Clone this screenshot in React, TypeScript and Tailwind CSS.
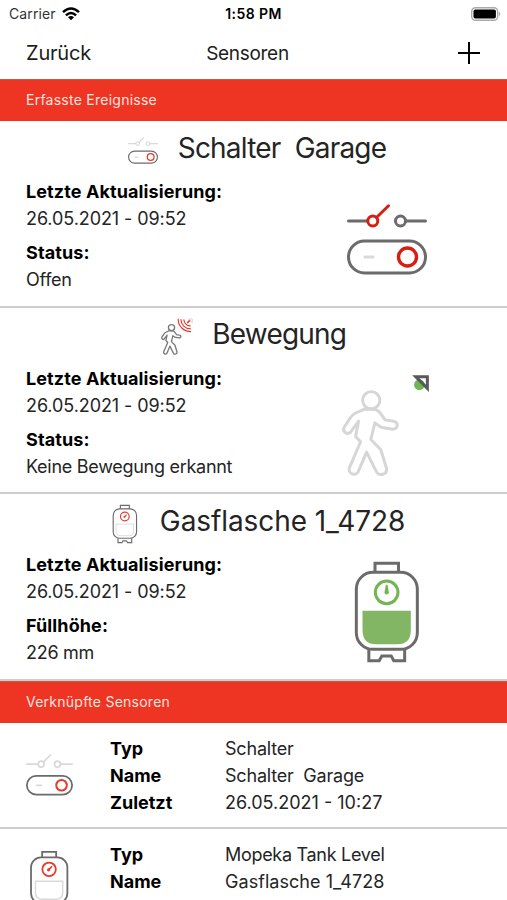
import type { ReactNode } from 'react'

type IconProps = { className: string; small?: boolean }

const SwitchIcon = ({ className, small }: IconProps) => {
  const accent = small ? '#d9d9d9' : '#d81e12'
  const line = small ? '#d9d9d9' : '#6b6b6b'
  return (
    <svg viewBox="0 0 80 71" className={className} fill="none" strokeWidth="3" strokeLinecap="round">
      <path d="M1.5 17H20M59 17H78.500" stroke={line} />
      <circle cx="53.500" cy="17" r="5" stroke={line} />
      <circle cx="25.800" cy="17" r="5" stroke={accent} />
      <path d="M29.500 13.500L41.500 1.800" stroke={accent} />
      <rect x="1.500" y="37" width="77" height="32" rx="16" stroke="#6b6b6b" />
      <path d="M18 53H26" stroke="#d9d9d9" />
      <circle cx="60.500" cy="53" r="9" stroke={small ? '#e8392b' : '#d81e12'} strokeWidth="3.400" />
    </svg>
  )
}

const MotionIcon = ({ className, small }: IconProps) => (
  <svg viewBox="30 40 280 320" className={className} fill="none" strokeLinejoin="round" strokeLinecap="round">
    <g stroke={small ? '#777777' : '#d6d6d6'} strokeWidth={small ? 11 : 9}>
      <circle cx="124" cy="121" r="26" />
      <path d="M106 147L76 160Q66 165 61 174L42 203C36 217 56 228 64 214L86 184L77 230L92 246L58 325C53 341 77 352 85 336L110 277L140 337C150 352 174 342 170 326L153 270L123 239L135 189L150 200Q154 203 161 204L188 208C205 208 208 186 191 184L166 180L149 157Q142 148 128 148Z" />
    </g>
    {small ? (
      <g stroke="#e8392b" strokeWidth="10">
        <path d="M180 50A105 105 0 0 0 285 155" />
        <path d="M203 53A80 80 0 0 0 283 131" />
        <path d="M228 55A55 55 0 0 0 281 107" />
        <path d="M260 78L276 62" strokeWidth="14" />
        <path d="M270 48H298V76Z" stroke="#c4c4c4" strokeWidth="6" />
      </g>
    ) : (
      <g>
        <circle cx="269" cy="74" r="16" fill="#6db651" />
        <path d="M258 50H293V85Z" stroke="#595959" strokeWidth="9" strokeLinejoin="miter" />
      </g>
    )}
  </svg>
)

const TankIcon = ({ className, small }: IconProps) => (
  <svg viewBox="40 30 200 312" className={className} fill="none" strokeWidth="9">
    <rect x="49.500" y="67" width="183" height="231" rx="50" stroke="#6b6b6b" />
    <path d="M105.500 67V39.500H176V67M87 297V332.500H118L126 318H154L162 332.500H194.500V297" stroke="#6b6b6b" />
    {small ? (
      <path d="M72 187H209V244Q209 278 174 278H107Q72 278 72 244Z" stroke="#d9d9d9" strokeWidth="7" />
    ) : (
      <path d="M68 182H213V240Q213 283 172 283H109Q68 283 68 240Z" fill="#82b564" />
    )}
    <circle cx="140.500" cy="127" r="34" stroke={small ? '#e8392b' : '#72b552'} />
    {small ? (
      <g>
        <path d="M138 130L155 112" stroke="#e8392b" strokeWidth="8" />
        <circle cx="138" cy="130" r="8" fill="#e8392b" />
      </g>
    ) : (
      <path d="M138 104H143L147 127A6.500 6.500 0 1 1 134 127Z" fill="#72b552" />
    )}
  </svg>
)

const SectionBar = ({ children }: { children: ReactNode }) => (
  <h2 className="h-[42px] shrink-0 bg-[#ee3524] border-t border-[#c9583f] px-[26px] text-[14px] leading-[40px] tracking-[0.25px] text-[#ffe3df]">
    {children}
  </h2>
)

type EventProps = {
  title: ReactNode
  icon: ReactNode
  label: string
  value: string
  image: ReactNode
}

const EventCard = ({ title, icon, label, value, image }: EventProps) => (
  <article className="h-[186.500px] shrink-0 border-b-2 border-[#cdcdcd] text-[18px] leading-[27px]">
    <div className="flex h-[57px] items-center justify-center gap-4 pb-[3px]">
      <div className="flex w-[38px] justify-center pt-[5px]">{icon}</div>
      {title}
    </div>
    <div className="flex justify-between pl-[26px]">
      <div className="text-[#242424]">
        <p className="font-bold tracking-[0.1px] text-black">Letzte Aktualisierung:</p>
        <p className="tracking-[-0.080px]">26.05.2021 - 09:52</p>
        <p className="mt-[7px] font-bold tracking-[0.1px] text-black">{label}</p>
        <p className="tracking-[-0.280px]">{value}</p>
      </div>
      <div className="flex h-[122px] w-[241px] items-center justify-center">{image}</div>
    </div>
  </article>
)

type SensorProps = { icon: ReactNode; children: ReactNode }

const SensorRow = ({ icon, children }: SensorProps) => (
  <article className="flex h-[106.300px] shrink-0 border-b-2 border-[#cdcdcd] pl-[26px] pt-[12.500px] text-[18px] leading-[27px]">
    <div className="flex w-[84px] items-start">{icon}</div>
    <dl className="grid auto-rows-[27px] grid-cols-[115px_auto] text-[#242424]">{children}</dl>
  </article>
)

const Term = ({ children }: { children: string }) => (
  <dt className="font-bold text-black">{children}</dt>
)

const App = () => {
  return (
    <main className="flex h-[900px] w-[507px] flex-col overflow-hidden bg-white font-['Inter','Liberation_Sans',sans-serif] text-black">
      <header className="h-[79px] shrink-0">
        <div className="grid h-[27px] grid-cols-3 items-center pl-[9px] pr-[6px] text-[14px]">
          <div className="flex items-center gap-1.5 text-[#333333]">
            <span className="tracking-[0.1px]">Carrier</span>
            <svg viewBox="0 0 18 14" className="h-[14px] w-[18px]" fill="none" stroke="black" strokeWidth="2.500">
              <path d="M1 5.200Q9-2.200 17 5.200M3.900 8.300Q9 3.600 14.100 8.300" />
              <path d="M6 10.200Q9 7.600 12 10.200L9 13.200Z" fill="black" stroke="none" />
            </svg>
          </div>
          <span className="whitespace-nowrap pr-[3px] text-center font-semibold tracking-[0.4px]">1:58 PM</span>
          <svg viewBox="0 0 30 14" className="h-[14px] w-[30px] justify-self-end">
            <rect x=".7" y=".7" width="26" height="12.600" rx="3.800" fill="white" stroke="#aaaaaa" strokeWidth="1.400" />
            <rect x="2.500" y="2.500" width="22.400" height="9" rx="1.800" fill="black" />
            <path d="M28 4.500Q30.500 7 28 9.500Z" fill="#aaaaaa" />
          </svg>
        </div>
        <nav className="grid h-[52px] grid-cols-3 items-center pl-[26px] pr-[27px]">
          <span className="text-[20px] tracking-[-0.2px] text-[#1c1c1c]">Zurück</span>
          <h1 className="pr-[11px] pt-0.5 text-center text-[19px] tracking-[-0.3px] text-[#1c1c1c]">Sensoren</h1>
          <svg viewBox="0 0 22 22" className="h-[22px] w-[22px] justify-self-end" stroke="black" strokeWidth="2">
            <path d="M0 11H22M11 0V22" />
          </svg>
        </nav>
      </header>

      <SectionBar>Erfasste Ereignisse</SectionBar>
      <EventCard
        title={<h3 className="-mr-[3px] whitespace-pre text-[28px] tracking-[-0.8px] text-[#242424]">Schalter  Garage</h3>}
        icon={<SwitchIcon small className="h-[27px] w-[30px]" />}
        label="Status:"
        value="Offen"
        image={<SwitchIcon className="h-[71px] w-[80px]" />}
      />
      <EventCard
        title={<h3 className="mr-[2.500px] text-[28px] tracking-[-0.8px] text-[#242424]">Bewegung</h3>}
        icon={<MotionIcon small className="h-[38px] w-[34px]" />}
        label="Status:"
        value="Keine Bewegung erkannt"
        image={<MotionIcon className="mt-0.5 h-[107px] w-[93px]" />}
      />
      <EventCard
        title={<h3 className="-mr-[4px] text-[28px] tracking-[-0.080px] text-[#242424]">Gasflasche 1_4728</h3>}
        icon={<TankIcon small className="h-[40px] w-[25.500px]" />}
        label="Füllhöhe:"
        value="226 mm"
        image={<TankIcon className="mr-px h-[104px] w-[67px]" />}
      />

      <SectionBar>Verknüpfte Sensoren</SectionBar>
      <SensorRow icon={<SwitchIcon small className="mt-[19px] h-[42px] w-[47px]" />}>
        <Term>Typ</Term>
        <dd className="tracking-[-0.2px]">Schalter</dd>
        <Term>Name</Term>
        <dd className="whitespace-pre tracking-[-0.2px]">Schalter  Garage</dd>
        <Term>Zuletzt</Term>
        <dd>26.05.2021 - 10:27</dd>
      </SensorRow>
      <SensorRow icon={<TankIcon small className="ml-[3px] mt-[9px] h-[62px] w-[40px]" />}>
        <Term>Typ</Term>
        <dd className="tracking-[-0.3px]">Mopeka Tank Level</dd>
        <Term>Name</Term>
        <dd className="tracking-[0.050px]">Gasflasche 1_4728</dd>
      </SensorRow>
    </main>
  )
}

export default App
